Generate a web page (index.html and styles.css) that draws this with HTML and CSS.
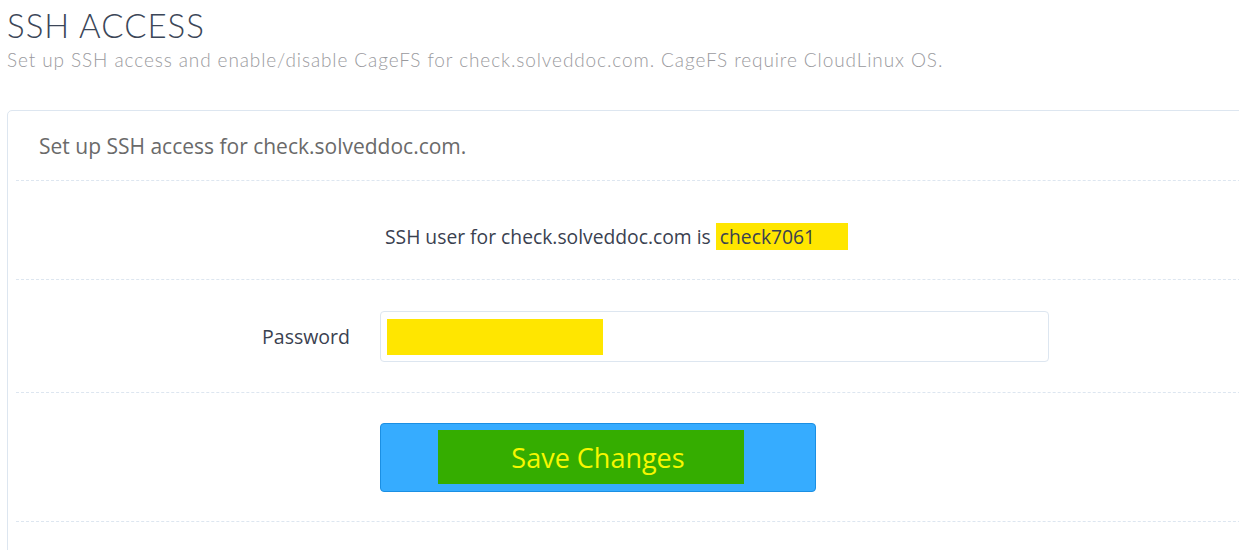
FILE: index.html
```html
<!DOCTYPE html>
<html>
<head>
<meta charset="utf-8">
<link rel="stylesheet" href="styles.css">
</head>
<body>
<div class="page">
  <h1 class="title">SSH ACCESS</h1>
  <p class="subtitle">Set up SSH access and enable/disable CageFS for check.solveddoc.com. CageFS require CloudLinux OS.</p>
  <div class="card">
    <div class="card-head">Set up SSH access for check.solveddoc.com.</div>
    <div class="row row-user">
      <span class="user-text">SSH user for check.solveddoc.com is <mark class="hl">check7061</mark></span>
    </div>
    <div class="row row-form">
      <label class="label">Password</label>
      <div class="input"><span class="input-hl"></span></div>
    </div>
    <div class="row row-btn">
      <div class="btn"><span class="btn-inner">Save Changes</span></div>
    </div>
    <div class="row row-tail"></div>
  </div>
</div>
</body>
</html>
```

FILE: styles.css
```css
html, body {
  margin: 0;
  padding: 0;
  background: #ffffff;
  overflow: hidden;
}
.page {
  padding: 0 0 0 7px;
  font-family: "Open Sans", "Liberation Sans", sans-serif;
}
.title {
  margin: 0;
  padding-top: 6px;
  font-family: "Lato", "Liberation Sans", sans-serif;
  font-weight: 300;
  font-size: 33px;
  line-height: 38px;
  color: #3b4658;
  letter-spacing: 1px;
}
.subtitle {
  margin: 3px 0 0;
  font-family: "Lato", "Liberation Sans", sans-serif;
  font-weight: 300;
  font-size: 19px;
  line-height: 26px;
  color: #9a9a9e;
  letter-spacing: 0.9px;
}
.card {
  margin-top: 37px;
  width: 1260px;
  border: 1px solid #dde6f0;
  border-radius: 5px;
  padding-left: 8px;
  height: 460px;
}
.card-head {
  height: 69px;
  display: flex;
  align-items: center;
  padding-left: 23px;
  font-size: 21px;
  color: #6a6a6a;
  border-bottom: 1px dashed #dde6f0;
}
.row {
  display: flex;
  align-items: center;
  border-bottom: 1px dashed #dde6f0;
}
.row-user {
  height: 99px;
  padding-left: 369px;
  padding-top: 45px;
  align-items: flex-start;
  box-sizing: border-box;
}
.user-text {
  font-size: 19.3px;
  color: #3a4150;
  line-height: 21px;
}
.hl {
  background: #ffe600;
  color: #3a4150;
  padding: 0 33px 0 4px;
}
.row-form {
  height: 112px;
}
.label {
  width: 334px;
  text-align: right;
  font-size: 19.5px;
  color: #3a4150;
  font-weight: 500;
}
.input {
  margin-left: 30px;
  margin-top: 1px;
  width: 669px;
  height: 51px;
  border: 1px solid #dde6f0;
  border-radius: 4px;
  box-sizing: border-box;
  display: flex;
  align-items: center;
  padding-left: 6px;
}
.input-hl {
  display: block;
  width: 216px;
  height: 36px;
  background: #ffe600;
}
.row-btn {
  height: 129px;
  padding-left: 364px;
  box-sizing: border-box;
}
.btn {
  width: 436px;
  height: 69px;
  box-sizing: border-box;
  background: #36acff;
  border: 1px solid #1b8fe3;
  border-radius: 4px;
  display: flex;
  align-items: center;
  padding-left: 57px;
  margin-top: 0;
}
.btn-inner {
  width: 306px;
  height: 54px;
  background: #35ad00;
  color: #f7f700;
  font-size: 27px;
  display: flex;
  align-items: center;
  justify-content: center;
  padding-left: 14px;
  box-sizing: border-box;
}
.row-tail {
  border-bottom: none;
  height: 30px;
}
```
